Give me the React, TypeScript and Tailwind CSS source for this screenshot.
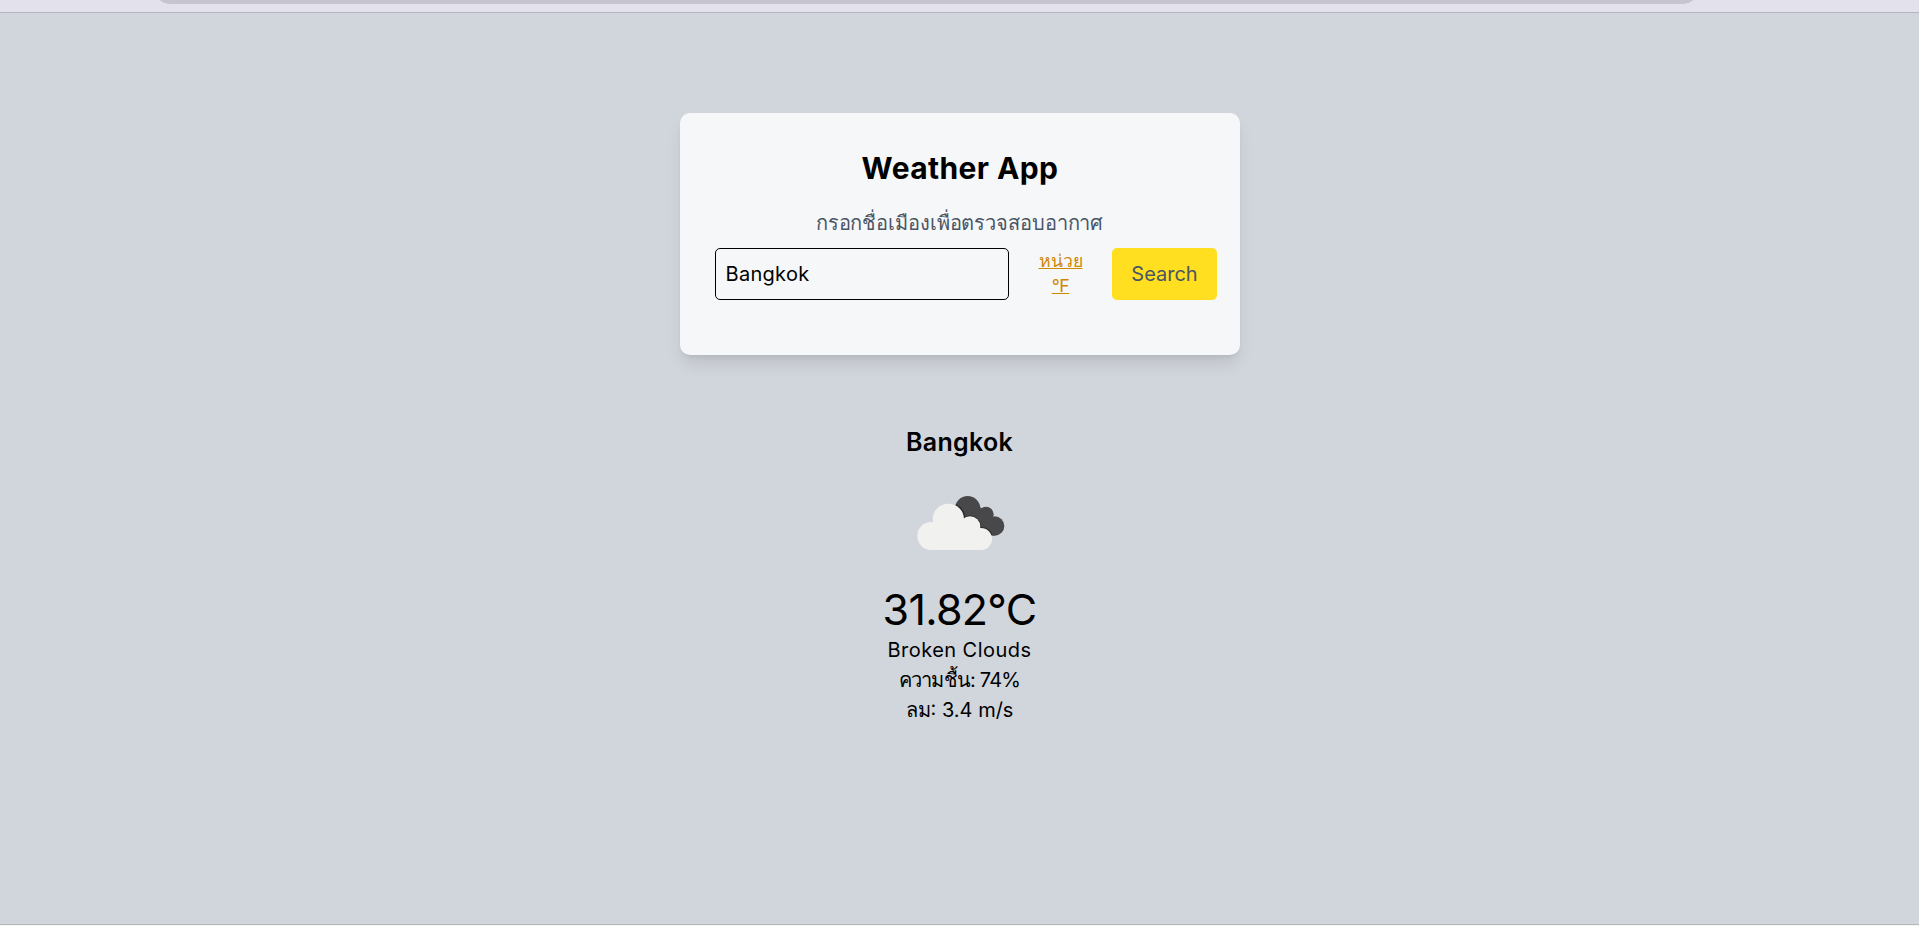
import React, { useState } from "react";

function CloudIcon() {
  return (
    <svg className="h-[110px] w-[110px]" viewBox="136 192 330 330" aria-hidden="true">
      <g fill="#48484a">
        <circle cx="321" cy="296" r="38" />
        <circle cx="376" cy="313" r="23" />
        <circle cx="402" cy="348" r="29" />
        <path d="M300 320 L350 285 L395 320 L402 377 L350 370 Z" />
      </g>
      <g fill="#2b2b2d">
        <path d="M286 282 A52 52 0 0 1 314 319 A35 35 0 0 1 362 351 A36 36 0 0 1 396 376 L350 375 L290 330 Z" />
      </g>
      <g fill="#f1f2f0">
        <circle cx="212" cy="378" r="42" />
        <circle cx="263" cy="328" r="47" />
        <circle cx="328" cy="350" r="31" />
        <circle cx="361" cy="387" r="33" />
        <path d="M212 420 L212 340 L300 320 L361 380 L361 420 Z" />
      </g>
    </svg>
  );
}

export default function App() {
  const [city, setCity] = useState("Bangkok");
  return (
    <div className="flex h-[926px] w-full flex-col overflow-hidden bg-[#d1d5dc] font-[Inter,'Noto_Sans',sans-serif] text-black">
      <div className="h-[13px] shrink-0 border-b border-[#b5b5bf] bg-[#e3e1eb] pl-[153px]">
        <div className="flex h-1 w-[1547px] items-end overflow-hidden">
          <div className="h-9 w-full shrink-0 rounded-[18px] bg-[#c6c4ce]" />
        </div>
      </div>
      <main className="flex flex-1 flex-col items-center pt-[100px]">
        <section className="flex h-[242px] w-[560px] flex-col rounded-[10px] bg-[#f6f7f9] pr-[23px] pl-[35px] shadow-[0_11px_16.5px_-3px_rgba(0,0,0,0.1),0_4px_7px_-4px_rgba(0,0,0,0.1)]">
          <h1 className="mt-[37px] ml-[-11px] text-center text-[30px] leading-9 font-bold tracking-[0.4px]">Weather App</h1>
          <p className="mt-[22px] ml-[-12px] text-center text-[20px] leading-[30px] tracking-[-0.1px] whitespace-nowrap text-[#4a5565]">กรอกชื่อเมืองเพื่อตรวจสอบอากาศ</p>
          <form className="mt-[10px] flex h-[52px] shrink-0" onSubmit={(e) => e.preventDefault()}>
            <input
              className="w-[294px] rounded-[5px] border border-black px-[10px] text-[20px] tracking-[0.3px] outline-none"
              value={city}
              onChange={(e) => setCity(e.target.value)}
            />
            <button type="button" className="flex w-[103px] flex-col items-center pl-px text-[17.6px] leading-[25px] text-[#d08700]">
              <span className="underline">หน่วย</span>
              <span className="tracking-[-0.5px] underline">°F</span>
            </button>
            <button type="submit" className="w-[105px] rounded-[5px] bg-[#ffdf20] pl-px text-[20px] text-[#4a5565]">Search</button>
          </form>
        </section>
        <section className="flex flex-col items-center text-[20px] leading-[30px]">
          <h2 className="mt-[71px] text-[25px] leading-8 font-semibold tracking-[0.3px]">Bangkok</h2>
          <div className="mt-4 ml-[3px]"><CloudIcon /></div>
          <p className="text-[43px] leading-[50px] tracking-[-0.7px]">31.82°C</p>
          <p className="mt-px tracking-[0.45px]">Broken Clouds</p>
          <p className="tracking-[-0.8px]">ความชื้น: 74%</p>
          <p>ลม: 3.4 m/s</p>
        </section>
      </main>
      <footer className="h-[2px] shrink-0 border-t border-[#b8b8bb] bg-[#f4f4f5]" />
    </div>
  );
}
